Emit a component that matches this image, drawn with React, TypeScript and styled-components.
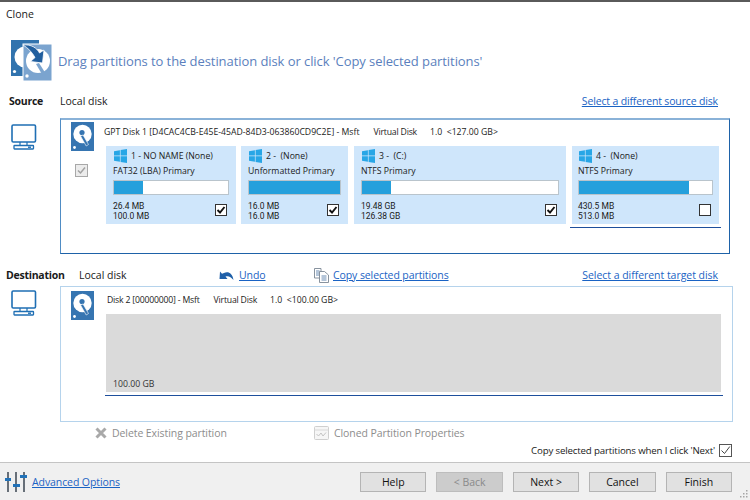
import React from "react";
import styled, { createGlobalStyle } from "styled-components";

const Global = createGlobalStyle`
  html, body { margin: 0; padding: 0; background: #fff; }
  body { font-family: "Open Sans", "Noto Sans", sans-serif; color: #1a1a1a; }
  * { box-sizing: border-box; }
`;

const Page = styled.div`
  width: 750px; height: 500px; display: flex; flex-direction: column; overflow: hidden; background: #fff;
  border-top: 2px solid #5a5a5a;
`;
const Title = styled.div`
  font-size: 10.5px; line-height: 14px; padding: 5px 0 0 6px; height: 38px;
`;
const Heading = styled.div`
  display: flex; align-items: center; height: 41px; padding-left: 11px; gap: 6px;
  font-size: 13px; color: #5b7fbd; letter-spacing: -0.07px;
`;
const SectionHead = styled.div<{ $top: number; $bottom: number; $labelW: number }>`
  display: grid; grid-template-columns: ${p => p.$labelW}px 1fr auto; align-items: center;
  height: 20px; margin-top: ${p => p.$top}px; margin-bottom: ${p => p.$bottom}px; font-size: 10.5px; padding-right: 32px;
`;
const Label = styled.span<{ $pad: number }>`
  font-weight: 700; padding-left: ${p => p.$pad}px; font-size: 10.5px; letter-spacing: -0.25px;
`;
const MidLinks = styled.div`
  display: flex; align-items: center; justify-content: flex-start;
`;
const LocalName = styled.span`
  width: 140px;
`;
const Lnk = styled.a<{ $left?: number; $w?: number; $sp?: number }>`
  color: #1a63c4; text-decoration: underline; font-size: 10.5px; white-space: nowrap;
  letter-spacing: ${p => p.$sp ?? -0.09}px;
  margin-left: ${p => p.$left ?? 0}px;
  ${p => p.$w ? `width: ${p.$w}px;` : ""}
`;
const SectionBody = styled.div`
  display: flex; height: 136px; padding-left: 11px;
`;
const MonitorCol = styled.div<{ $top: number }>`
  width: 49px; padding-top: ${p => p.$top}px;
`;
const Panel = styled.div<{ $active?: boolean; $w: number }>`
  width: ${p => p.$w}px; height: 100%; position: relative; padding: ${p => p.$active ? 2 : 4}px 0 0 10px;
  border: 1px solid ${p => p.$active ? "#1e62a8" : "#b5d3ec"};
  ${p => p.$active ? "border-top-color:#8ab2d8; border-top-width:2px; border-left-color:#4f8cc4;" : ""}
`;
const DiskRow = styled.div`
  display: flex;
`;
const DiskSide = styled.div`
  width: 35px; display: flex; flex-direction: column;
`;
const GrayCheck = styled.div`
  width: 13px; height: 13px; margin: 13px 0 0 4px; border: 1px solid #a8a8a8; background: #ececec;
  display: flex; align-items: center; justify-content: center;
`;
const DiskMain = styled.div`
  flex: 1; display: flex; flex-direction: column; min-width: 0;
`;
const DiskTitle = styled.div<{ $pad: number; $h: number }>`
  display: flex; font-size: 8.7px; height: ${p => p.$h}px; line-height: ${p => (p.$h - 4)}px;
  margin-left: ${p => p.$pad}px; white-space: pre;
`;
const DiskName = styled.span<{ $sp: number }>`
  letter-spacing: ${p => p.$sp}px;
`;
const Meta = styled.span`
  margin-left: 14px; letter-spacing: -0.2px;
`;
const Capacity = styled.span`
  margin-left: 13px;
`;
const Partitions = styled.div`
  display: flex;
`;
const PartSlot = styled.div<{ $w: number; $gap: number; $sel?: boolean }>`
  width: ${p => p.$w}px; margin-right: ${p => p.$gap}px; position: relative; height: 78px; flex: none;
  ${p => p.$sel ? `&::after { content: ""; position: absolute; left: -2px; right: -2px; top: 81px; height: 1px; background: #1e4f9c; }` : ""}
`;
const Part = styled.div<{ $pad: number }>`
  background: #cfe6fb; height: 78px; padding: 3px ${p => p.$pad}px 0; font-size: 8.7px; position: relative; display: flex; flex-direction: column;
`;
const PartHead = styled.div`
  display: flex; align-items: center; gap: 4px; height: 14px; padding-left: 1px; white-space: pre;
`;
const PartFs = styled.div`
  line-height: 14px; white-space: nowrap; height: 13px; margin-top: 1px;
`;
const Bar = styled.div`
  height: 15px; margin-top: 3px; background: #fff; border: 1px solid #b9c4cc;
`;
const Fill = styled.div`
  height: 100%; background: #25a0dc;
`;
const Sizes = styled.div`
  display: flex; justify-content: space-between; align-items: flex-start; margin-top: 6px;
`;
const SizeText = styled.div`
  font-family: Roboto, "Open Sans", sans-serif; font-size: 8.5px; line-height: 10px;
`;
const Check = styled.div`
  width: 12px; height: 12px; border: 1px solid #333; background: #fff; margin: 3px 2px 0 0;
  display: flex; align-items: center; justify-content: center; flex: none;
`;
const BigCheck = styled.div`
  width: 13px; height: 13px; border: 1px solid #555; background: #fff;
  display: flex; align-items: center; justify-content: center; flex: none;
`;
const GrayArea = styled.div`
  height: 78px; width: 615px; background: #dadada; position: relative; display: flex; align-items: flex-end;
  padding: 0 0 3px 7px; font-size: 8.7px; color: #333; line-height: 10px;
  &::after { content: ""; position: absolute; left: -1px; width: 618px; top: 81px; height: 1px; background: #1e4f9c; }
`;
const Actions = styled.div`
  display: flex; align-items: center; height: 16px; margin-top: 3px; font-size: 10.5px; color: #8d8d8d; padding-left: 95px; letter-spacing: -0.08px;
`;
const Action = styled.div<{ $w: number }>`
  display: flex; align-items: center; width: ${p => p.$w}px; gap: 5px; white-space: nowrap;
`;
const CopyRow = styled.div`
  display: flex; justify-content: flex-end; align-items: center; gap: 4px; height: 18px; padding-right: 18px; font-size: 9.7px; letter-spacing: -0.16px;
`;
const Footer = styled.div`
  margin-top: 3px; height: 38px; flex: none; background: #f0f0f0; border-top: 1px solid #c4c4c4; display: flex; align-items: center;
  padding: 0 18px 0 5px; position: relative;
`;
const FootLeft = styled.div`
  display: flex; align-items: center; gap: 5px; flex: 1;
`;
const Buttons = styled.div`
  display: flex; gap: 10px;
`;
const Btn = styled.button<{ $off?: boolean }>`
  width: 66.4px; height: 20px; padding: 0; font: inherit; font-size: 10.5px;
  border: 1px solid ${p => p.$off ? "#bdbdbd" : "#b4b4b4"}; background: ${p => p.$off ? "#cccccc" : "#e1e1e1"};
  color: ${p => p.$off ? "#8a8a8a" : "#111"};
`;
const Grip = styled.svg`
  position: absolute; right: 1px; bottom: 1px;
`;

const Tick = () => (
  <svg width="10" height="10" viewBox="0 0 10 10"><path d="M1.5 5 L4 7.5 L8.5 2" fill="none" stroke="#111" strokeWidth="1.9" /></svg>
);
const ThinTick = () => (
  <svg width="11" height="11" viewBox="0 0 11 11"><path d="M1.5 5.5 L4.5 8.5 L9.8 1.5" fill="none" stroke="#444" strokeWidth="1" /></svg>
);
const GrayTick = () => (
  <svg width="11" height="11" viewBox="0 0 11 11"><path d="M2 5.5 L4.5 8 L9 2.5" fill="none" stroke="#a2a2a2" strokeWidth="1.5" /></svg>
);
const Monitor = () => (
  <svg width="26" height="26" viewBox="0 0 26 26" fill="none" stroke="#1f6fb4" strokeWidth="1.6" style={{ display: "block" }}>
    <rect x="1" y="1" width="23.5" height="17" rx="1.2" />
    <path d="M9 21 V18 M16 21 V18" strokeWidth="1.2" />
    <rect x="3" y="21.5" width="19.5" height="3.5" rx=".5" strokeWidth="1.3" />
    <path d="M17 23.2 h3" strokeWidth="1.4" />
  </svg>
);
const Disk = () => (
  <svg width="23" height="29" viewBox="0 0 23 29" style={{ display: "block" }}>
    <rect width="23" height="29" fill="#3675b1" />
    <circle cx="11.5" cy="12" r="9.2" fill="#fff" />
    <circle cx="11" cy="10.5" r="2.6" fill="#3675b1" />
    <path d="M9.5 14 L12 13 L17.5 22.5 L15.2 24Z" fill="#3675b1" stroke="#fff" strokeWidth=".6" />
    <circle cx="3.5" cy="25.5" r="1.4" fill="#fff" />
  </svg>
);
const Win = () => (
  <svg width="13" height="14" viewBox="0 0 13 14" style={{ flex: "none" }}>
    <path d="M0 2.2 L5.9 1.2 V6.6 H0Z M6.6 1.1 L13 0 V6.6 H6.6Z M0 7.3 H5.9 V12.8 L0 11.8Z M6.6 7.3 H13 V14 L6.6 12.9Z" fill="#27a6e6" />
  </svg>
);
const HeadIcon = () => (
  <svg width="41" height="41" viewBox="0 0 41 41" style={{ display: "block" }}>
    <rect x="0" y="0" width="28" height="36" fill="#3173ae" />
    <circle cx="14" cy="17" r="10.5" fill="#fff" />
    <circle cx="3.5" cy="31.5" r="1.6" fill="#fff" />
    <rect x="12" y="4" width="29" height="37" fill="#7ba4cf" stroke="#fff" strokeWidth="1" />
    <circle cx="27" cy="21" r="12" fill="#fff" />
    <path d="M25 24 L28 23 L35 34 L32 36Z" fill="#7ba4cf" />
    <circle cx="16" cy="36" r="1.7" fill="#fff" />
    <path d="M12 5 C20 4 26 8 28.5 13 L33 10 L31.5 23 L19.5 21.5 L24 17.5 C21 12 17 8 12 5Z" fill="#225f9e" stroke="#fff" strokeWidth=".8" />
  </svg>
);
const UndoIcon = () => (
  <svg width="15" height="11" viewBox="0 0 15 11" style={{ display: "block" }}>
    <path d="M5 3 C9 1 13.5 3 14.5 10 C12 6.5 9 5.5 6.5 6.5 L8.5 9 L0.5 9 L1 1.5 L3 3.7Z" fill="#1f5fa8" />
  </svg>
);
const CopyIcon = () => (
  <svg width="15" height="15" viewBox="0 0 15 15" fill="#fff" stroke="#7b8794" strokeWidth=".9" style={{ display: "block" }}>
    <path d="M.5 .5 H7 V10 H.5Z" />
    <path d="M2 3 H5.5 M2 5 H5.5 M2 7 H5.5" stroke="#5a7faa" />
    <path d="M5.5 3.5 H10.5 L14.5 7 V14.5 H5.5Z" />
    <path d="M7.5 8 H12.5 M7.5 10 H12.5 M7.5 12 H12.5" stroke="#5a7faa" />
  </svg>
);
const XIcon = () => (
  <svg width="12" height="12" viewBox="0 0 12 12" style={{ flex: "none" }}>
    <path d="M1.5 1.5 L10.5 10.5 M10.5 1.5 L1.5 10.5" stroke="#a9a9a9" strokeWidth="3" />
  </svg>
);
const PropsIcon = () => (
  <svg width="15" height="14" viewBox="0 0 15 14" fill="none" style={{ flex: "none" }}>
    <rect x=".5" y=".5" width="14" height="13" rx="1" stroke="#cfcfcf" fill="#f6f6f6" />
    <path d="M.5 4 H14.5" stroke="#d8d8d8" />
    <path d="M2.5 8 L4.5 10 L7 7 L9 10 L12 6.5" stroke="#c4c4c4" />
  </svg>
);
const Sliders = () => (
  <svg width="22" height="22" viewBox="0 0 22 22" style={{ display: "block" }}>
    <path d="M3 1 V21 M11 1 V21 M19 1 V21" stroke="#3a4450" strokeWidth="1.5" />
    <rect x="0" y="7" width="6" height="3" fill="#2272b8" />
    <rect x="8" y="13" width="7" height="3" fill="#2272b8" />
    <rect x="15" y="4" width="7" height="3" fill="#2272b8" />
  </svg>
);

type P = { w: number; gap: number; pad: number; head: string; fs: string; pct: number; a: string; b: string; on: boolean; sel?: boolean };
const parts: P[] = [
  { w: 130, gap: 5, pad: 7, head: "1 - NO NAME (None)", fs: "FAT32 (LBA) Primary", pct: 25, a: "26.4 MB", b: "100.0 MB", on: true },
  { w: 107, gap: 6, pad: 7, head: "2 -  (None)", fs: "Unformatted Primary", pct: 100, a: "16.0 MB", b: "16.0 MB", on: true },
  { w: 212, gap: 6, pad: 7, head: "3 -  (C:)", fs: "NTFS Primary", pct: 15, a: "19.48 GB", b: "126.38 GB", on: true },
  { w: 147, gap: 0, pad: 6, head: "4 -  (None)", fs: "NTFS Primary", pct: 83, a: "430.5 MB", b: "513.0 MB", on: false, sel: true },
];

export default function App() {
  return (
    <Page>
      <Global />
      <Title>Clone</Title>
      <Heading>
        <HeadIcon />
        <span>Drag partitions to the destination disk or click 'Copy selected partitions'</span>
      </Heading>
      <SectionHead $top={10} $bottom={7} $labelW={60}>
        <Label $pad={9}>Source</Label>
        <span>Local disk</span>
        <Lnk $sp={-0.15}>Select a different source disk</Lnk>
      </SectionHead>
      <SectionBody>
        <MonitorCol $top={6}><Monitor /></MonitorCol>
        <Panel $active $w={670}>
          <DiskRow>
            <DiskSide>
              <Disk />
              <GrayCheck><GrayTick /></GrayCheck>
            </DiskSide>
            <DiskMain>
              <DiskTitle $pad={-2} $h={24}>
                <DiskName $sp={0}>GPT Disk 1 [D4CAC4CB-E45E-45AD-84D3-063860CD9C2E] - Msft</DiskName>
                <Meta>Virtual Disk</Meta>
                <Capacity>1.0  {"<127.00 GB>"}</Capacity>
              </DiskTitle>
              <Partitions>
                {parts.map(p => (
                  <PartSlot key={p.head} $w={p.w} $gap={p.gap} $sel={p.sel}>
                    <Part $pad={p.pad}>
                      <PartHead><Win /><span>{p.head}</span></PartHead>
                      <PartFs>{p.fs}</PartFs>
                      <Bar><Fill style={{ width: `${p.pct}%` }} /></Bar>
                      <Sizes>
                        <SizeText>{p.a}<br />{p.b}</SizeText>
                        <Check>{p.on && <Tick />}</Check>
                      </Sizes>
                    </Part>
                  </PartSlot>
                ))}
              </Partitions>
            </DiskMain>
          </DiskRow>
        </Panel>
      </SectionBody>
      <SectionHead $top={11} $bottom={1} $labelW={79}>
        <Label $pad={6}>Destination</Label>
        <MidLinks>
          <LocalName>Local disk</LocalName>
          <UndoIcon />
          <Lnk $left={5} $w={75}>Undo</Lnk>
          <CopyIcon />
          <Lnk $left={4}>Copy selected partitions</Lnk>
        </MidLinks>
        <Lnk $sp={-0.04}>Select a different target disk</Lnk>
      </SectionHead>
      <SectionBody>
        <MonitorCol $top={4}><Monitor /></MonitorCol>
        <Panel $w={673}>
          <DiskRow>
            <DiskSide><Disk /></DiskSide>
            <DiskMain>
              <DiskTitle $pad={1} $h={23}>
                <DiskName $sp={-0.2}>Disk 2 [00000000] - Msft</DiskName>
                <Meta>Virtual Disk</Meta>
                <Capacity>1.0  {"<100.00 GB>"}</Capacity>
              </DiskTitle>
              <GrayArea>100.00 GB</GrayArea>
            </DiskMain>
          </DiskRow>
        </Panel>
      </SectionBody>
      <Actions>
        <Action $w={219}><XIcon /><span>Delete Existing partition</span></Action>
        <Action $w={200}><PropsIcon /><span>Cloned Partition Properties</span></Action>
      </Actions>
      <CopyRow>
        <span>Copy selected partitions when I click 'Next'</span>
        <BigCheck><ThinTick /></BigCheck>
      </CopyRow>
      <Footer>
        <FootLeft><Sliders /><Lnk>Advanced Options</Lnk></FootLeft>
        <Buttons>
          <Btn>Help</Btn>
          <Btn $off>&lt; Back</Btn>
          <Btn>Next &gt;</Btn>
          <Btn>Cancel</Btn>
          <Btn>Finish</Btn>
        </Buttons>
        <Grip width="10" height="10" viewBox="0 0 10 10" fill="#a5a5a5">
          <rect x="7" y="1" width="1.5" height="1.5" /><rect x="7" y="4" width="1.5" height="1.5" /><rect x="4" y="4" width="1.5" height="1.5" />
          <rect x="7" y="7" width="1.5" height="1.5" /><rect x="4" y="7" width="1.5" height="1.5" /><rect x="1" y="7" width="1.5" height="1.5" />
        </Grip>
      </Footer>
    </Page>
  );
}
